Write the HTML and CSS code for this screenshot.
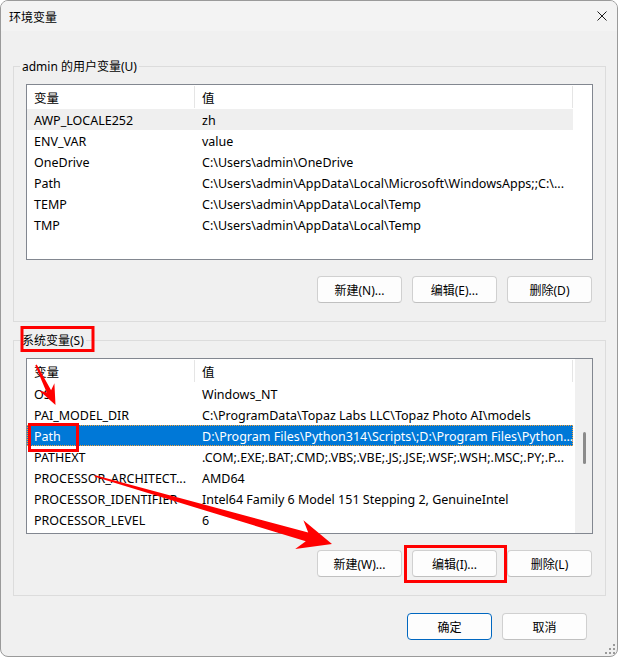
FILE: index.html
```html
<!DOCTYPE html>
<html lang="zh-CN">
<head>
    <meta charset="UTF-8">
    <title>环境变量</title>
    <link rel="stylesheet" href="styles.css">
</head>
<body>
    <div class="window">
        <div class="titlebar">
            <span class="title">环境变量</span>
            <svg class="close" width="10" height="10" viewBox="0 0 10 10">
                <path d="M0.5 0.5 L9.5 9.5 M9.5 0.5 L0.5 9.5" stroke="#1b1b1b" stroke-width="1" fill="none"/>
            </svg>
        </div>

        <div class="dialog-body">
            <!-- user variables -->
            <fieldset class="group">
                <legend>admin 的用户变量(U)</legend>
                <div class="listview">
                    <div class="lv-table">
                        <div class="lv-head">
                            <div class="cell name">变量</div>
                            <div class="cell value">值</div>
                        </div>
                        <div class="lv-row hover"><div class="cell name">AWP_LOCALE252</div><div class="cell value">zh</div></div>
                        <div class="lv-row"><div class="cell name">ENV_VAR</div><div class="cell value">value</div></div>
                        <div class="lv-row"><div class="cell name">OneDrive</div><div class="cell value">C:\Users\admin\OneDrive</div></div>
                        <div class="lv-row"><div class="cell name">Path</div><div class="cell value">C:\Users\admin\AppData\Local\Microsoft\WindowsApps;;C:\...</div></div>
                        <div class="lv-row"><div class="cell name">TEMP</div><div class="cell value">C:\Users\admin\AppData\Local\Temp</div></div>
                        <div class="lv-row"><div class="cell name">TMP</div><div class="cell value">C:\Users\admin\AppData\Local\Temp</div></div>
                    </div>
                </div>
                <div class="btn-row">
                    <button class="btn">新建(N)...</button>
                    <button class="btn">编辑(E)...</button>
                    <button class="btn">删除(D)</button>
                </div>
            </fieldset>

            <!-- system variables -->
            <fieldset class="group group-sys">
                <legend>系统变量(S)</legend>
                <div class="listview">
                    <div class="lv-table">
                        <div class="lv-head">
                            <div class="cell name">变量</div>
                            <div class="cell value">值</div>
                        </div>
                        <div class="lv-row"><div class="cell name">OS</div><div class="cell value">Windows_NT</div></div>
                        <div class="lv-row"><div class="cell name">PAI_MODEL_DIR</div><div class="cell value">C:\ProgramData\Topaz Labs LLC\Topaz Photo AI\models</div></div>
                        <div class="lv-row selected"><div class="cell name">Path</div><div class="cell value">D:\Program Files\Python314\Scripts\;D:\Program Files\Python...</div></div>
                        <div class="lv-row"><div class="cell name">PATHEXT</div><div class="cell value">.COM;.EXE;.BAT;.CMD;.VBS;.VBE;.JS;.JSE;.WSF;.WSH;.MSC;.PY;.P...</div></div>
                        <div class="lv-row"><div class="cell name">PROCESSOR_ARCHITECT...</div><div class="cell value">AMD64</div></div>
                        <div class="lv-row"><div class="cell name">PROCESSOR_IDENTIFIER</div><div class="cell value">Intel64 Family 6 Model 151 Stepping 2, GenuineIntel</div></div>
                        <div class="lv-row"><div class="cell name">PROCESSOR_LEVEL</div><div class="cell value">6</div></div>
                    </div>
                    <div class="lv-scroll"><div class="thumb"></div></div>
                </div>
                <div class="btn-row">
                    <button class="btn">新建(W)...</button>
                    <button class="btn">编辑(I)...</button>
                    <button class="btn">删除(L)</button>
                </div>
            </fieldset>

            <div class="btn-row dialog-buttons">
                <button class="btn default">确定</button>
                <button class="btn">取消</button>
            </div>
        </div>

        <svg class="grip" width="10" height="10" viewBox="0 0 10 10">
            <g fill="#9a9a9a">
                <rect x="8" y="0" width="2" height="2"/>
                <rect x="4" y="4" width="2" height="2"/>
                <rect x="8" y="4" width="2" height="2"/>
                <rect x="0" y="8" width="2" height="2"/>
                <rect x="4" y="8" width="2" height="2"/>
                <rect x="8" y="8" width="2" height="2"/>
            </g>
        </svg>

        <!-- red annotations drawn over the dialog -->
        <svg class="marks" width="618" height="659" viewBox="0 0 618 659">
            <g fill="none" stroke="#ff0000" stroke-width="3">
                <rect x="22" y="327.5" width="71" height="23"/>
                <rect x="29.5" y="424.5" width="48" height="26"/>
                <rect x="405.5" y="546.5" width="100" height="35"/>
            </g>
            <g fill="#ff0000">
                <polygon points="36.7,364.6 51.1,390.3 54.4,383.2 55.5,405 39.2,390.6 46.7,392.5 35.3,365.4"/>
                <polygon points="95.2,475.2 308.2,532.6 303.4,520.3 332,544 295.2,549.1 305.8,541.2 94.8,476.8"/>
            </g>
        </svg>
    </div>
</body>
</html>
```

FILE: styles.css
```css
body {
    margin: 0;
    padding: 0;
    background-color: white;
    font-family: "Noto Sans", "Noto Sans CJK SC", sans-serif;
    font-size: 12px;
    color: black;
}
.window {
    position: relative;
    width: 618px;
    height: 657px;
    box-sizing: border-box;
    border: 1px solid #9a9a9a;
    border-radius: 8px;
    background-color: #f0f0f0;
    overflow: hidden;
}
.titlebar {
    height: 30px;
    display: flex;
    align-items: center;
    justify-content: space-between;
    padding: 0 10px 0 8px;
    background-color: #f3f3f3;
}
.title {
    font-family: "Noto Sans CJK SC", sans-serif;
}
.dialog-body {
    padding: 27px 11px 0 12px;
}
.group {
    margin: 0;
    border: 1px solid #dcdcdc;
    padding: 9px 12px 18px 12px;
}
.group legend {
    margin-left: -6px;
    padding: 0 2px;
    line-height: 17px;
}
.group-sys {
    margin-top: 10px;
}
.listview {
    display: flex;
    height: 176px;
    box-sizing: border-box;
    border: 1px solid #828790;
    background-color: white;
    font-size: 12.5px;
}
.lv-table {
    width: 546px;
}
.lv-head {
    display: flex;
    height: 24px;
    align-items: center;
}
.lv-head .cell {
    height: 22px;
    border-right: 1px solid #e5e5e5;
}
.lv-row {
    display: flex;
    height: 21px;
    align-items: center;
}
.cell {
    display: flex;
    align-items: center;
    box-sizing: border-box;
    padding: 1px 0 0 7px;
    white-space: nowrap;
    overflow: hidden;
}
.cell.name {
    width: 168px;
}
.cell.value {
    width: 378px;
}
.lv-row.hover {
    background-color: #efefef;
}
.lv-row.selected {
    background-color: #0078d7;
    color: white;
    outline: 1px dotted #f7a33a;
    outline-offset: -1px;
}
.lv-scroll {
    margin-left: auto;
    width: 17px;
    background-color: #f0f0f0;
    display: flex;
    justify-content: center;
}
.lv-scroll .thumb {
    width: 3px;
    height: 32px;
    margin-top: 73px;
    margin-left: 2px;
    background-color: #8b8b8b;
    border-radius: 2px;
}
.btn-row {
    display: flex;
    justify-content: flex-end;
    gap: 10px;
    margin-top: 16px;
    padding-right: 1px;
}
.btn {
    width: 85px;
    height: 27px;
    border: 1px solid #d0d0d0;
    border-bottom-color: #c0c0c0;
    border-radius: 4px;
    background-color: #fdfdfd;
    font-family: "Noto Sans", "Noto Sans CJK SC", sans-serif;
    font-size: 12px;
    color: black;
    padding: 0;
}
.btn.default {
    border: 1px solid #0067c0;
}
.dialog-buttons {
    margin-top: 17px;
    padding-right: 19px;
}
.grip {
    position: absolute;
    right: 2px;
    bottom: 2px;
}
.marks {
    position: absolute;
    left: -1px;
    top: -1px;
    pointer-events: none;
}
```
